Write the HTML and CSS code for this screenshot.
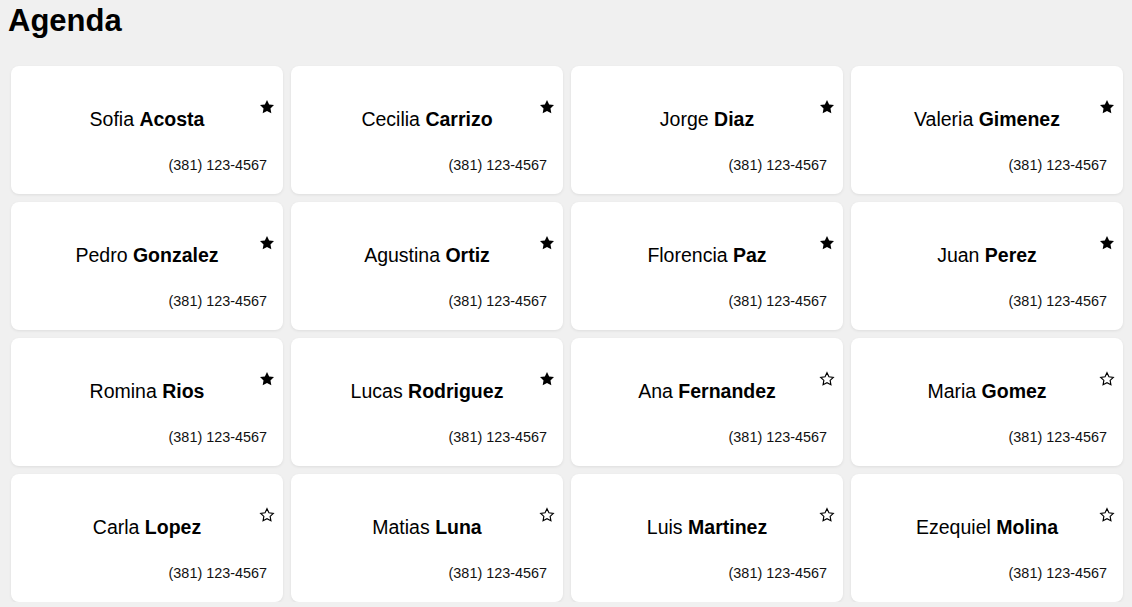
FILE: index.html
```html
<!DOCTYPE html>
<html lang="es">
<head>
<meta charset="utf-8">
<title>Agenda</title>
<link rel="stylesheet" href="styles.css">
</head>
<body>
<h1 class="title">Agenda</h1>
<div class="grid">
  <div class="card"><div class="name">Sofia <b>Acosta</b></div><div class="phone">(381) 123-4567</div><svg class="star" viewBox="0 0 24 24"><polygon class="full" points="12,1.5 15.2,8.1 22.5,9.1 17.2,14.2 18.5,21.5 12,18 5.5,21.5 6.8,14.2 1.5,9.1 8.8,8.1"/></svg></div>
  <div class="card"><div class="name">Cecilia <b>Carrizo</b></div><div class="phone">(381) 123-4567</div><svg class="star" viewBox="0 0 24 24"><polygon class="full" points="12,1.5 15.2,8.1 22.5,9.1 17.2,14.2 18.5,21.5 12,18 5.5,21.5 6.8,14.2 1.5,9.1 8.8,8.1"/></svg></div>
  <div class="card"><div class="name">Jorge <b>Diaz</b></div><div class="phone">(381) 123-4567</div><svg class="star" viewBox="0 0 24 24"><polygon class="full" points="12,1.5 15.2,8.1 22.5,9.1 17.2,14.2 18.5,21.5 12,18 5.5,21.5 6.8,14.2 1.5,9.1 8.8,8.1"/></svg></div>
  <div class="card"><div class="name">Valeria <b>Gimenez</b></div><div class="phone">(381) 123-4567</div><svg class="star" viewBox="0 0 24 24"><polygon class="full" points="12,1.5 15.2,8.1 22.5,9.1 17.2,14.2 18.5,21.5 12,18 5.5,21.5 6.8,14.2 1.5,9.1 8.8,8.1"/></svg></div>

  <div class="card"><div class="name">Pedro <b>Gonzalez</b></div><div class="phone">(381) 123-4567</div><svg class="star" viewBox="0 0 24 24"><polygon class="full" points="12,1.5 15.2,8.1 22.5,9.1 17.2,14.2 18.5,21.5 12,18 5.5,21.5 6.8,14.2 1.5,9.1 8.8,8.1"/></svg></div>
  <div class="card"><div class="name">Agustina <b>Ortiz</b></div><div class="phone">(381) 123-4567</div><svg class="star" viewBox="0 0 24 24"><polygon class="full" points="12,1.5 15.2,8.1 22.5,9.1 17.2,14.2 18.5,21.5 12,18 5.5,21.5 6.8,14.2 1.5,9.1 8.8,8.1"/></svg></div>
  <div class="card"><div class="name">Florencia <b>Paz</b></div><div class="phone">(381) 123-4567</div><svg class="star" viewBox="0 0 24 24"><polygon class="full" points="12,1.5 15.2,8.1 22.5,9.1 17.2,14.2 18.5,21.5 12,18 5.5,21.5 6.8,14.2 1.5,9.1 8.8,8.1"/></svg></div>
  <div class="card"><div class="name">Juan <b>Perez</b></div><div class="phone">(381) 123-4567</div><svg class="star" viewBox="0 0 24 24"><polygon class="full" points="12,1.5 15.2,8.1 22.5,9.1 17.2,14.2 18.5,21.5 12,18 5.5,21.5 6.8,14.2 1.5,9.1 8.8,8.1"/></svg></div>

  <div class="card"><div class="name">Romina <b>Rios</b></div><div class="phone">(381) 123-4567</div><svg class="star" viewBox="0 0 24 24"><polygon class="full" points="12,1.5 15.2,8.1 22.5,9.1 17.2,14.2 18.5,21.5 12,18 5.5,21.5 6.8,14.2 1.5,9.1 8.8,8.1"/></svg></div>
  <div class="card"><div class="name">Lucas <b>Rodriguez</b></div><div class="phone">(381) 123-4567</div><svg class="star" viewBox="0 0 24 24"><polygon class="full" points="12,1.5 15.2,8.1 22.5,9.1 17.2,14.2 18.5,21.5 12,18 5.5,21.5 6.8,14.2 1.5,9.1 8.8,8.1"/></svg></div>
  <div class="card"><div class="name">Ana <b>Fernandez</b></div><div class="phone">(381) 123-4567</div><svg class="star" viewBox="0 0 24 24"><polygon class="empty" points="12,2.5 14.9,8.6 21.5,9.5 16.7,14.1 17.9,20.7 12,17.5 6.1,20.7 7.3,14.1 2.5,9.5 9.1,8.6"/></svg></div>
  <div class="card"><div class="name">Maria <b>Gomez</b></div><div class="phone">(381) 123-4567</div><svg class="star" viewBox="0 0 24 24"><polygon class="empty" points="12,2.5 14.9,8.6 21.5,9.5 16.7,14.1 17.9,20.7 12,17.5 6.1,20.7 7.3,14.1 2.5,9.5 9.1,8.6"/></svg></div>

  <div class="card"><div class="name">Carla <b>Lopez</b></div><div class="phone">(381) 123-4567</div><svg class="star" viewBox="0 0 24 24"><polygon class="empty" points="12,2.5 14.9,8.6 21.5,9.5 16.7,14.1 17.9,20.7 12,17.5 6.1,20.7 7.3,14.1 2.5,9.5 9.1,8.6"/></svg></div>
  <div class="card"><div class="name">Matias <b>Luna</b></div><div class="phone">(381) 123-4567</div><svg class="star" viewBox="0 0 24 24"><polygon class="empty" points="12,2.5 14.9,8.6 21.5,9.5 16.7,14.1 17.9,20.7 12,17.5 6.1,20.7 7.3,14.1 2.5,9.5 9.1,8.6"/></svg></div>
  <div class="card"><div class="name">Luis <b>Martinez</b></div><div class="phone">(381) 123-4567</div><svg class="star" viewBox="0 0 24 24"><polygon class="empty" points="12,2.5 14.9,8.6 21.5,9.5 16.7,14.1 17.9,20.7 12,17.5 6.1,20.7 7.3,14.1 2.5,9.5 9.1,8.6"/></svg></div>
  <div class="card"><div class="name">Ezequiel <b>Molina</b></div><div class="phone">(381) 123-4567</div><svg class="star" viewBox="0 0 24 24"><polygon class="empty" points="12,2.5 14.9,8.6 21.5,9.5 16.7,14.1 17.9,20.7 12,17.5 6.1,20.7 7.3,14.1 2.5,9.5 9.1,8.6"/></svg></div>
</div>
</body>
</html>
```
FILE: styles.css
```css
html, body {
  margin: 0;
  padding: 0;
  background: #f0f0f0;
  font-family: "Liberation Sans", Arial, sans-serif;
  color: #000;
  overflow: hidden;
}

.title {
  margin: 0;
  padding: 3px 8px 0;
  font-size: 31px;
  line-height: 36px;
  font-weight: bold;
}

.grid {
  display: grid;
  grid-template-columns: repeat(4, 1fr);
  gap: 8px;
  padding: 27px 9px 0 11px;
}

.card {
  position: relative;
  height: 128px;
  box-sizing: border-box;
  background: #fff;
  border-radius: 8px;
  box-shadow: 0 1px 3px rgba(0, 0, 0, 0.08);
  display: flex;
  flex-direction: column;
  padding: 41px 16px 0;
}

.name {
  font-size: 19.5px;
  line-height: 24px;
  text-align: center;
}

.name b {
  font-weight: bold;
}

.phone {
  margin-top: 26px;
  font-size: 14.4px;
  line-height: 17px;
  text-align: right;
  color: #111;
}

.star {
  position: absolute;
  top: 33px;
  right: 8px;
  width: 16px;
  height: 16px;
}

.star .full {
  fill: #000;
}

.star .empty {
  fill: none;
  stroke: #000;
  stroke-width: 1.7;
  stroke-linejoin: miter;
}
```
